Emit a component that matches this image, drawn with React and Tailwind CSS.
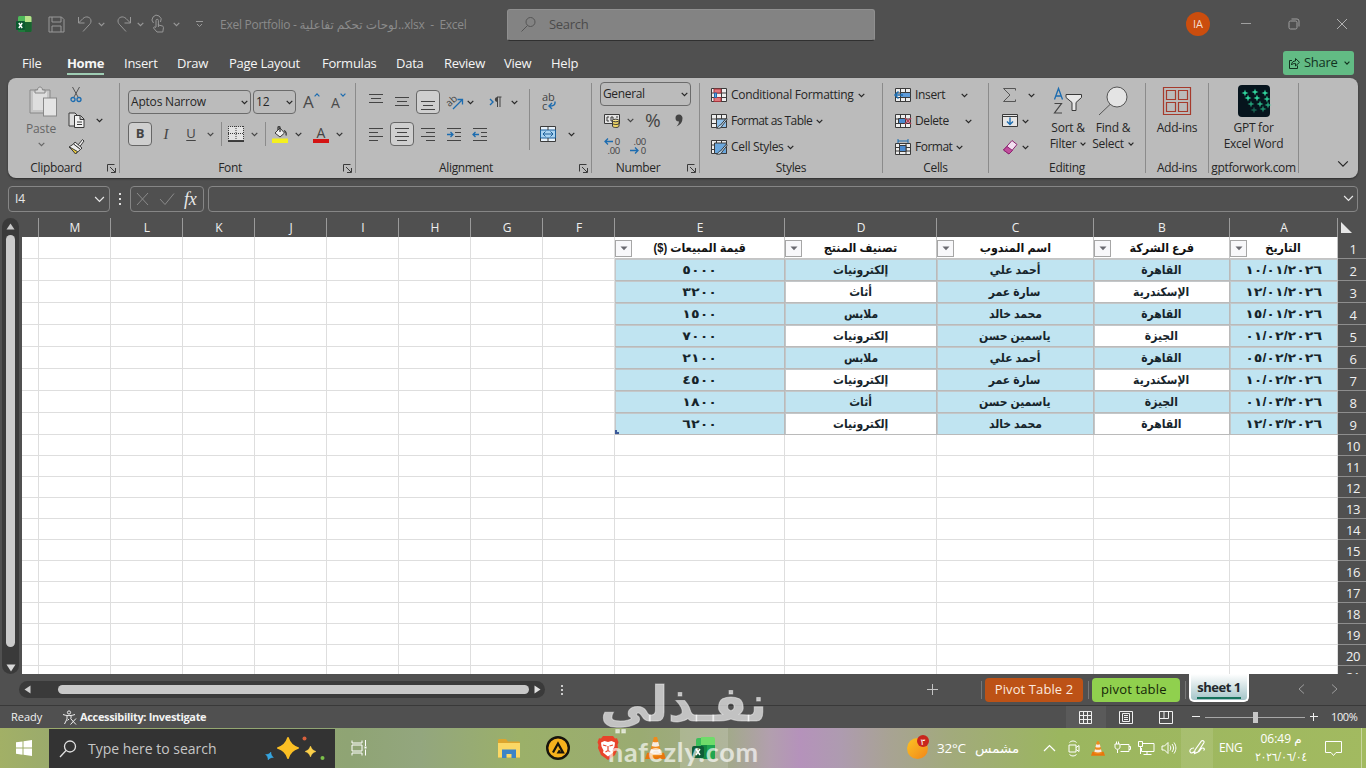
import React from "react";
import clsx from "clsx";

const UI_FONT = "font-['Open_Sans','Noto_Sans','DejaVu_Sans',sans-serif]";
const AR_FONT = "font-['Liberation_Sans','DejaVu_Sans',sans-serif]";

const Chevron = ({ className, w = 7 }) => (
  <svg
    className={clsx("shrink-0", className)}
    width={w}
    height={w}
    viewBox="0 0 8 8"
    fill="none"
    stroke="currentColor"
    strokeWidth="1.2"
  >
    <path d="M.8 2.2 4 5.4 7.2 2.2" vectorEffect="non-scaling-stroke" />
  </svg>
);

// Thin wrapper so each icon only has to list its shapes
const Icon = ({ w = 16, h = 16, className, children }) => (
  <svg
    width={w}
    height={h}
    viewBox={`0 0 ${w} ${h}`}
    fill="none"
    stroke="#3a3a3a"
    strokeWidth="1"
    className={clsx("shrink-0 overflow-visible", className)}
  >
    {children}
  </svg>
);

/* ---------- Title bar ---------- */

const ExcelLogo = ({ className, size = 16 }) => (
  <svg width={size} height={size} viewBox="0 0 16 16" className={clsx("shrink-0", className)}>
    <rect x="2" y="0" width="13.5" height="16" rx="1.5" fill="#1f7a3c" />
    <path d="M3.5 0H9v6H2V1.500A1.500 1.500 0 0 1 3.500 0Z" fill="#4fb85a" />
    <path d="M9 0h5a1.500 1.500 0 0 1 1.500 1.500V6H9Z" fill="#b7e28a" />
    <path d="M9 6h6.500v8.500A1.500 1.500 0 0 1 14 16H9Z" fill="#17652f" />
    <rect x="0" y="5" width="9" height="9" rx="1" fill="#0c5a30" />
    <path d="m2.800 7 3.400 5M6.200 7l-3.400 5" stroke="#fff" strokeWidth="1.400" />
  </svg>
);

// Newer, brighter variant of the logo used on the taskbar
const ExcelTaskbarLogo = () => (
  <svg width="24" height="24" viewBox="0 0 24 24" className="shrink-0">
    <path d="M6 2h8v9H4V4a2 2 0 0 1 2-2Z" fill="#3cbf5a" />
    <path d="M9 1h12a2 2 0 0 1 2 2v6H9Z" fill="#6fdc6a" />
    <path d="M9 9h14v12a2 2 0 0 1-2 2H9Z" fill="#138a43" />
    <path d="M15 9h8v12a2 2 0 0 1-2 2h-6Z" fill="#1fa650" />
    <rect x="0" y="10" width="12" height="12" rx="2" fill="#0e5c36" />
    <path d="m4 13 4 6M8 13l-4 6" stroke="#fff" strokeWidth="1.500" />
  </svg>
);

const TitleBar = () => (
  <div className="flex h-12 items-center text-[#8b8b8b]">
    <ExcelLogo className="ml-4" />
    <Icon w={17} h={17} className="ml-4 stroke-[#989898]">
      <path d="M1 1h12.500l2.500 2.500V16H1ZM4 1v5h9V1M4 16v-6h9v6" />
    </Icon>
    <Icon w={16} h={18} className="ml-[12px] stroke-[#989898]">
      <path d="M1.500 2v6h6M1.500 8 6 3.500c3-3 8-1.500 8 2.500 0 2-1 3-2 4l-6 6.500" />
    </Icon>
    <Chevron className="ml-[5px] text-[#989898]" />
    <Icon w={16} h={18} className="ml-[11px] stroke-[#989898]">
      <path d="M14.500 2v6h-6M14.500 8 10 3.500C7 .5 2 2 2 6c0 2 1 3 2 4l6 6.500" />
    </Icon>
    <Chevron className="ml-[5px] text-[#989898]" />
    <Icon w={14} h={18} className="ml-[7px] stroke-[#989898]">
      <path d="M2.500 8A4.500 4.500 0 1 1 9.500 7M5 12V5.500a1.200 1.200 0 0 1 2.400 0V10l4 1c1 .3 1.100 1 1 2l-.6 4H6l-3.500-4c0-1 1-1.500 2.500-.5M7.400 12V9" />
    </Icon>
    <Chevron className="ml-[8px] text-[#989898]" />
    <Icon w={9} h={8} className="ml-[15px] stroke-[#989898]">
      <path d="M1 1.500h7M2 4l2.500 2.500L7 4" />
    </Icon>
    <div className="ml-[16px] w-[287px] pt-px whitespace-nowrap text-[12px] tracking-[-0.27px]">
      Exel Portfolio - لوحات تحكم تفاعلية..xlsx&nbsp; -&nbsp; Excel
    </div>
    <div className="mt-px flex h-8 w-[368px] items-center rounded-[3px] border border-[#8f8f8f] border-b-[#303030] bg-[#838383] text-[#4b4b4b]">
      <Icon w={17} h={17} className="ml-[12px] stroke-[#555]">
        <circle cx="10.500" cy="6" r="4.500" />
        <path d="M7.500 9.500 1.500 15.500" />
      </Icon>
      <span className="ml-3 text-[13px] tracking-[-0.3px]">Search</span>
    </div>
    <div className="ml-[311px] flex size-6 items-center justify-center rounded-full bg-[#cb4d0d] text-[11px] text-[#f3ded2]">
      IA
    </div>
    <Icon w={12} h={12} className="ml-[30px] stroke-[#a0a0a0]">
      <path d="M1 5.500h10" />
    </Icon>
    <Icon w={12} h={12} className="ml-[36px] stroke-[#a0a0a0]">
      <rect x="1" y="3" width="8" height="8" rx="1.500" />
      <path d="M3.500 1H9a2 2 0 0 1 2 2v5.500" />
    </Icon>
    <Icon w={12} h={12} className="ml-[36px] stroke-[#b0b0b0]">
      <path d="m1 1 10 10M11 1 1 11" />
    </Icon>
  </div>
);

const menuTabs = [
  { name: "File", width: "w-[45px]" },
  { name: "Home", width: "w-[57px]", active: true },
  { name: "Insert", width: "w-[53px]" },
  { name: "Draw", width: "w-[52px]" },
  { name: "Page Layout", width: "w-[93px]" },
  { name: "Formulas", width: "w-[74px]" },
  { name: "Data", width: "w-[48px]" },
  { name: "Review", width: "w-[60px]" },
  { name: "View", width: "w-[47px]" },
  { name: "Help", width: "w-[40px]" },
];

const MenuTabs = () => (
  <div className="flex h-[30px] pl-[22px] text-[13px] tracking-[-0.25px] text-[#f5f5f5]">
    {menuTabs.map((tab) => (
      <div key={tab.name} className={clsx("shrink-0 whitespace-nowrap", tab.width)}>
        <span
          className={clsx(
            "inline-block h-[27px] pt-[5px] leading-5",
            tab.active && "border-b-2 border-[#9fcdb4] font-bold tracking-[-0.35px]"
          )}
        >
          {tab.name}
        </span>
      </div>
    ))}
    <div className="mt-[3px] mr-3 ml-auto flex h-6 w-[71px] items-center rounded-[3px] bg-[#62bb84] text-[#12331f]">
      <Icon w={12} h={12} className="ml-[5px] stroke-[#12331f]">
        <path d="M4 3.500H1.500v8h8V8.500M3.500 8c0-3 2-4 4-4V1.500l4 3.800-4 3.700V6.500c-2 0-3 .2-4 1.500Z" />
      </Icon>
      <span className="ml-1 text-[13px] tracking-[-0.3px]">Share</span>
      <Chevron className="ml-[7px]" w={6} />
    </div>
  </div>
);

/* ---------- Ribbon ---------- */

const Group = ({ label, width, launcher, children }) => (
  <div className={clsx("flex shrink-0 flex-col", width)}>
    <div className="flex h-20">{children}</div>
    <div className="flex h-5 items-center">
      <span
        className={clsx(
          "flex-1 text-center text-[12px] leading-4 tracking-[-0.35px] whitespace-nowrap",
          launcher && "pr-[3px]"
        )}
      >
        {label}
      </span>
      {launcher && (
        <Icon w={9} h={9} className="mr-[3px]">
          <path d="M.5 7.500v-7h7M3 3l5 5M8.500 4v4.500H4" />
        </Icon>
      )}
    </div>
  </div>
);

const Divider = () => <div className="mt-[5px] h-[90px] w-px shrink-0 bg-[#8b8b8b]" />;

const Lines = ({ rows, className, children }) => (
  <Icon w={14} h={15} className={clsx("stroke-[#444]", className)}>
    {rows.map(([x1, x2, y]) => (
      <path key={y} d={`M${x1} ${y}.5H${x2}`} />
    ))}
    {children}
  </Icon>
);

const Toggle = ({ className, children }) => (
  <div
    className={clsx(
      "flex size-6 shrink-0 items-center justify-center rounded-[4px] border border-[#666] bg-[#cfcfcf]",
      className
    )}
  >
    {children}
  </div>
);

const Clipboard = () => (
  <Group label="Clipboard" width="w-[111px]" launcher>
    <div className="ml-[18px] flex w-[30px] flex-col items-center pt-[8px] text-[#666]">
      <Icon w={28} h={32} className="ml-1">
        <path d="M1 4h20v23H1Z" fill="#c6c6c6" stroke="#888" />
        <path d="M4 6h14v18H4Z" fill="#dedede" stroke="none" />
        <path d="M6 7V4h2.500C8.500 0 13.500 0 13.500 4H16v3Z" fill="#d8d8d8" stroke="#888" />
        <rect x="14.500" y="12" width="13" height="18" fill="#e4e4e4" stroke="#888" />
      </Icon>
      <span className="text-[12px] leading-[21px] tracking-[-0.1px]">Paste</span>
      <Chevron className="mt-[2px]" />
    </div>
    <div className="ml-[11px] flex w-[18px] flex-col items-center pt-2">
      <Icon w={12} h={18}>
        <path d="M2.500 1 8 11M9.500 1 4 11" stroke="#555" />
        <circle cx="3" cy="13.500" r="2" stroke="#1c6cb0" strokeWidth="1.300" />
        <circle cx="9" cy="13.500" r="2" stroke="#1c6cb0" strokeWidth="1.300" />
      </Icon>
      <Icon w={17} h={17} className="mt-2">
        <path d="M6 14H1V1h6l2 2" fill="#ddd" />
        <path d="M6.500 3.500h6l3.500 3.500v8.500H6.500ZM12 4v3.500h4M9 10h5M9 12.500h5" fill="#f3f3f3" />
      </Icon>
      <Icon w={17} h={17} className="mt-[9px]">
        <path d="m10 7 4.500-5.500 1.500 1.500L11.500 9" fill="#eee" />
        <path d="m7 4 7 6-1.500 1.500-7-5.500Z" fill="#eee" />
        <path d="m5.500 6 7 5.500L8 15.500 1 9Z" fill="#eee" />
        <path d="m1.500 9 8 4.500-2 2.500Z" fill="#e9c93a" />
      </Icon>
    </div>
    <Chevron className="mt-[39px] ml-[11px]" />
  </Group>
);

const FontGroup = () => (
  <Group label="Font" width="w-[235px]" launcher>
    <div className="flex flex-col pl-[8px]">
      <div className="mt-[12px] flex h-6 items-center">
        <div className="flex h-6 w-[123px] items-center justify-between rounded-[4px] border border-[#6b6b6b] pr-[2px] pl-[2px] text-[12px] tracking-[-0.2px]">
          Aptos Narrow
          <Chevron />
        </div>
        <div className="ml-[2px] flex h-6 w-[43px] items-center justify-between rounded-[4px] border border-[#6b6b6b] px-[2px] text-[12px] tracking-[-0.2px]">
          12
          <Chevron />
        </div>
        <div className="ml-[7px] flex w-7 text-[17px] leading-5 text-[#4a4a4a]">
          A<Chevron w={6} className="rotate-180 text-[#1c6cb0]" />
        </div>
        <div className="flex w-5 pt-[2px] text-[14px] leading-5 text-[#4a4a4a]">
          A<Chevron w={6} className="-mt-px text-[#1c6cb0]" />
        </div>
      </div>
      <div className="mt-2 flex h-6 items-center text-[#444]">
        <Toggle>
          <span className="text-[13px] font-bold">B</span>
        </Toggle>
        <span className="ml-[9px] w-[10px] text-center font-['Liberation_Serif',serif] text-[15px] italic">I</span>
        <span className="ml-[15px] w-[10px] text-center text-[13px] underline underline-offset-2">U</span>
        <Chevron className="ml-[11px]" />
        <div className="ml-[7px] h-6 w-px bg-[#8b8b8b]" />
        <Icon w={16} h={16} className="ml-[6px]">
          <path d="M.5.5h15v14H.5Z" fill="#e4e4e4" stroke="none" />
          <path d="M.5 0v14M15.500 0v14M8 0v14M0 .5h16M0 7.500h16" strokeDasharray="1 1" />
          <path d="M0 15h16" stroke="#111" strokeWidth="1.500" />
        </Icon>
        <Chevron className="ml-[7px]" />
        <div className="ml-[7px] h-6 w-px bg-[#8b8b8b]" />
        <Icon w={16} h={17} className="ml-[6px]">
          <path d="m3 7 5-5 4.500 5L8 11Z" fill="#eee" />
          <path d="M6 4V1.500c0-1 2-1 2 0V6M12 4.500c2 1 2.500 3 2 5" strokeWidth="1.300" />
          <path d="M0 12.500h16V17H0Z" fill="#f4f01e" stroke="none" />
        </Icon>
        <Chevron className="ml-[7px] text-[#333]" />
        <div className="ml-[11px] w-4 border-b-4 border-[#d41414] text-center text-[14px] leading-[13px]">A</div>
        <Chevron className="ml-[7px] text-[#333]" />
      </div>
    </div>
  </Group>
);

const Alignment = () => (
  <Group label="Alignment" width="w-[235px]" launcher>
    <div className="flex w-[173px] flex-col pl-[13px]">
      <div className="mt-[12px] flex h-6 items-center">
        <Lines rows={[[0, 14, 1], [2, 12, 5], [0, 14, 9]]} className="mb-1" />
        <Lines rows={[[0, 14, 2], [2, 12, 6], [0, 14, 10]]} className="ml-3" />
        <Toggle className="ml-[7px]">
          <Lines rows={[[0, 14, 4], [2, 12, 8], [0, 14, 12]]} className="mt-1" />
        </Toggle>
        <Icon w={18} h={17} className="ml-[6px]">
          <text x="1" y="11" fontSize="10" fill="#444" stroke="none" transform="rotate(-42 5 9)" className={UI_FONT}>
            ab
          </text>
          <path d="m7 15 9-9M11.500 5.500H16.500V10.500" stroke="#1c6cb0" strokeWidth="1.300" />
        </Icon>
        <Chevron className="ml-[3px]" />
        <Icon w={13} h={14} className="ml-[15px]">
          <path d="m1 4 3 3-3 3" stroke="#1c6cb0" strokeWidth="1.400" />
          <path d="M8.500 2v10M11 2v10M12.500 2H8" stroke="#444" />
          <path d="M8.500 2C5 2 5 7 8.500 7Z" fill="#444" stroke="none" />
        </Icon>
        <Chevron className="ml-[9px]" />
      </div>
      <div className="mt-2 flex h-6 items-center">
        <Lines rows={[[0, 14, 1], [0, 9, 5], [0, 14, 9], [0, 9, 13]]} />
        <Toggle className="ml-[7px]">
          <Lines rows={[[0, 14, 1], [2, 12, 5], [0, 14, 9], [2, 12, 13]]} />
        </Toggle>
        <Lines rows={[[0, 14, 1], [5, 14, 5], [0, 14, 9], [5, 14, 13]]} className="ml-[7px]" />
        <Lines rows={[[0, 14, 1], [8, 14, 5], [8, 14, 9], [0, 14, 13]]} className="ml-3">
          <path d="M0 7.500h6M3.500 5 6 7.500 3.500 10" stroke="#1c6cb0" strokeWidth="1.300" />
        </Lines>
        <Lines rows={[[0, 14, 1], [8, 14, 5], [8, 14, 9], [0, 14, 13]]} className="ml-3">
          <path d="M0 7.500h6M2.500 5 0 7.500 2.500 10" stroke="#1c6cb0" strokeWidth="1.300" />
        </Lines>
      </div>
    </div>
    <div className="mt-[11px] h-[61px] w-px bg-[#8b8b8b]" />
    <div className="ml-[10px] flex flex-col">
      <Icon w={16} h={18} className="mt-[15px] ml-[2px]">
        <text x="0" y="7.500" fontSize="11" fill="#444" stroke="none" className={UI_FONT}>
          ab
        </text>
        <text x="0" y="16.500" fontSize="11" fill="#444" stroke="none" className={UI_FONT}>
          c
        </text>
        <path d="M13 8.500v1.500c0 2-1 3-5.500 3M10 10l-3 3 3 3" stroke="#1c6cb0" strokeWidth="1.400" />
      </Icon>
      <div className="mt-[15px] flex items-center">
        <Icon w={16} h={16}>
          <path d="M.5.5h15v15H.5Z" fill="#e8f2fa" />
          <path d="M.5 4h15v8H.5Z" fill="#a9d2f0" stroke="#1c5f99" />
          <path d="M3 8h10M5.500 5.500 3 8l2.500 2.500M10.500 5.500 13 8l-2.500 2.500" stroke="#1c5f99" />
          <path d="M8 .5V4M8 12v3.500" />
        </Icon>
        <Chevron className="ml-[12px]" />
      </div>
    </div>
  </Group>
);

const NumberGroup = () => (
  <Group label="Number" width="w-[107px]" launcher>
    <div className="flex flex-col pl-[8px]">
      <div className="mt-[4px] flex h-6 w-[91px] items-center justify-between rounded-[4px] border border-[#6b6b6b] px-[2px] text-[12px] tracking-[-0.35px]">
        General
        <Chevron />
      </div>
      <div className="mt-[3px] flex h-[22px] items-center text-[#444]">
        <Icon w={17} h={14} className="mt-[2px] ml-[4px]">
          <path d="M.5.5h15v9H.5Z" fill="#e4e4e4" />
          <path d="M5 3H3v4h2M7 3v4h2V3ZM12 3h2" />
          <path d="M8.500 6.500v5.500c0 2 6.500 2 6.500 0V6.500" fill="#efd564" />
          <ellipse cx="11.750" cy="6.500" rx="3.250" ry="1.300" fill="#f5e28c" />
          <path d="M8.500 9.300c0 1.600 6.500 1.600 6.500 0" />
        </Icon>
        <Chevron className="ml-[6px]" />
        <span className="ml-[11px] text-[19px] leading-5">%</span>
        <Icon w={8} h={13} className="ml-[14px]">
          <path
            d="M4 .5a3.500 3.500 0 0 1 3.500 3.800C7.500 8 5.500 11 1.500 12.500c1.500-1.500 2.300-3 2.500-5A3.500 3.500 0 1 1 4 .5Z"
            fill="#444"
            stroke="none"
          />
        </Icon>
      </div>
      <div className="mt-[4px] flex h-[22px] items-center text-[9.5px] leading-[9px] tracking-[-0.3px] text-[#444]">
        <div className="ml-[4px] w-4">
          <div className="flex items-center justify-between">
            <Icon w={9} h={7}>
              <path d="M1 3.500h8M4 .5l-3 3 3 3" stroke="#1c6cb0" strokeWidth="1.300" />
            </Icon>
            0
          </div>
          <div className="text-right">.00</div>
        </div>
        <div className="ml-[10px] w-4">
          <div className="text-right">.00</div>
          <div className="flex items-center justify-between">
            <Icon w={9} h={7}>
              <path d="M0 3.500h8M5 .5l3 3-3 3" stroke="#1c6cb0" strokeWidth="1.300" />
            </Icon>
            0
          </div>
        </div>
      </div>
    </div>
  </Group>
);

const gridLines = "M.5 1.500h15v13H.5ZM.5 6h15M.5 10.500h15M5.500 1.500v13M10.500 1.500v13";

const styleRows = [
  {
    name: "Conditional Formatting",
    text: "w-[124px] tracking-[-0.28px]",
    gap: "ml-[3px]",
    art: (
      <>
        <path d={gridLines} fill="#eee" />
        <path d="M3 2h7v4H3ZM3 10.500h7v4H3Z" fill="#e0777c" stroke="#a8343c" />
        <path d="M3.500 6h2v4.500h-2Z" fill="#6a9fd8" stroke="#1c6cb0" />
      </>
    ),
  },
  {
    name: "Format as Table",
    text: "w-[82px] tracking-[-0.55px]",
    gap: "ml-[3px]",
    art: (
      <>
        <path d={gridLines} fill="#eee" />
        <path d="M5.500 6h10v8.500h-10Z" fill="#8fc0ea" />
        <path d="m15.500 5-6 7c-2 0-2 2.500-4 3 2.500.8 5 0 5.500-2l5-6.500Z" fill="#bcd9ef" />
      </>
    ),
  },
  {
    name: "Cell Styles",
    text: "w-[53px] tracking-[-0.3px]",
    gap: "ml-[3px]",
    art: (
      <>
        <path d={gridLines} fill="#eee" />
        <path d="M3.500 4h12v10.500h-12Z" fill="#6aa7dd" />
        <path d="m15.500 5-6 7c-2 0-2 2.500-4 3 2.500.8 5 0 5.500-2l5-6.500Z" fill="#bcd9ef" />
      </>
    ),
  },
];

const cellRows = [
  {
    name: "Insert",
    text: "w-[29px] tracking-[-0.35px]",
    gap: "ml-[17px]",
    art: (
      <>
        <path d={gridLines} fill="#eee" />
        <path d="M5.500 5.500h10v5h-10Z" fill="#5f9bd8" />
        <path d="M0 8h8M3.500 4.500 0 8l3.500 3.500" stroke="#1c6cb0" strokeWidth="1.500" />
      </>
    ),
  },
  {
    name: "Delete",
    text: "w-[33px] tracking-[-0.4px]",
    gap: "ml-[17px]",
    art: (
      <>
        <path d={gridLines} fill="#eee" />
        <path d="M3.500 5.500h7v5h-7Z" fill="#4a8ad0" />
        <path d="m10 5 6 6M16 5l-6 6" stroke="#b04058" strokeWidth="1.500" />
      </>
    ),
  },
  {
    name: "Format",
    text: "w-[38px] tracking-[-0.5px]",
    gap: "ml-[3px]",
    art: (
      <>
        <path d="M.5 4.500h15v11H.5ZM.5 8.500h15M.5 12h15M4.500 4.500v11M11 4.500v11" fill="#eee" />
        <path d="M4.500 6.500H11v6H4.500Z" fill="#4a8ad0" />
        <path d="M3 0v4M13 0v4M3 2h10" stroke="#1c6cb0" />
      </>
    ),
  },
];

const IconList = ({ rows, className }) => (
  <div className={clsx("flex flex-col pt-[4px]", className)}>
    {rows.map((row) => (
      <div key={row.name} className="flex h-[26px] shrink-0 items-center text-[12px]">
        <Icon className="-ml-px">{row.art}</Icon>
        <span className={clsx("ml-1 whitespace-nowrap", row.text)}>{row.name}</span>
        <Chevron className={row.gap} />
      </div>
    ))}
  </div>
);

const BigButton = ({ icon, lines, className, chevron }) => (
  <div className={clsx("flex shrink-0 flex-col items-center text-[12px] leading-4 tracking-[-0.25px]", className)}>
    <div className="flex h-[42px] items-center pt-[3px]">{icon}</div>
    {lines.map((line, i) => (
      <div key={line} className="flex items-center whitespace-nowrap">
        {line}
        {chevron && i === lines.length - 1 && <Chevron w={6} className="ml-1" />}
      </div>
    ))}
  </div>
);

const Editing = () => (
  <Group label="Editing" width="w-[156px]">
    <div className="ml-[13px] flex w-[47px] flex-col pt-[4px]">
      <div className="flex h-[26px] shrink-0 items-center">
        <Icon className="stroke-[#555]">
          <path d="M13.500 3.500V1.500H1.500L8 8l-6.500 6.500h12v-2" />
        </Icon>
        <Chevron className="ml-[10px]" />
      </div>
      <div className="flex h-[26px] shrink-0 items-center">
        <Icon>
          <path d="M.5 1.500h15v12H.5Z" fill="#e6e6e6" />
          <path d="M.5 3.500h15" />
          <path d="M8 4.500v7M5 8.500l3 3 3-3" stroke="#1c6cb0" strokeWidth="1.400" />
        </Icon>
        <Chevron className="ml-[4px]" />
      </div>
      <div className="flex h-[26px] shrink-0 items-center">
        <Icon>
          <path d="M10 1.500 15 5.500 7 15 1.500 11Z" fill="#f2dff0" stroke="#8c2470" />
          <path d="M5 7.500 10.500 11.500 7 15 1.500 11Z" fill="#c24d9c" stroke="#8c2470" />
        </Icon>
        <Chevron className="ml-[4px]" />
      </div>
    </div>
    <BigButton
      className="w-[38px]"
      lines={["Sort &", "Filter"]}
      chevron
      icon={
        <Icon w={30} h={28}>
          <path d="M1.500 12.500 5.500 1.500l4 11M3 9h5" stroke="#1c6cb0" strokeWidth="1.300" />
          <path d="M1.500 16.500h7l-7 9.500h7.500" stroke="#444" strokeWidth="1.200" />
          <path d="M13 7.500h15.500v3l-5.500 5v8h-4v-8l-6-5Z" fill="#e8e8e8" />
        </Icon>
      }
    />
    <BigButton
      className="ml-[6px] w-[40px]"
      lines={["Find &", "Select"]}
      chevron
      icon={
        <Icon w={30} h={30}>
          <circle cx="19" cy="11" r="10" fill="#e4e4e4" stroke="#555" />
          <path d="M12 18.500 1 29" stroke="#555" />
        </Icon>
      }
    />
  </Group>
);

const sparkles = [
  [7, 8, 1], [17, 7, 1], [27, 8, 1], [10, 13, 1], [19, 13, 1], [29, 14, 0.9],
  [13, 19, 0.7], [22, 19, 0.8], [16, 25, 0.4], [25, 24, 0.6], [30, 20, 0.7],
];

const Ribbon = () => (
  <div className="mx-2 flex h-[100px] shrink-0 overflow-hidden rounded-[8px] bg-[#bbbbbb] text-[#262626] shadow-[0_1px_2px_#2c2c2c]">
    <Clipboard />
    <Divider />
    <FontGroup />
    <Divider />
    <Alignment />
    <Divider />
    <NumberGroup />
    <Divider />
    <Group label="Styles" width="w-[182px]">
      <IconList rows={styleRows} className="pl-[12px]" />
    </Group>
    <Divider />
    <Group label="Cells" width="w-[105px]">
      <IconList rows={cellRows} className="pl-[13px]" />
    </Group>
    <Divider />
    <Editing />
    <Divider />
    <Group label="Add-ins" width="w-[62px]">
      <BigButton
        className="w-[62px]"
        lines={["Add-ins"]}
        icon={
          <Icon w={28} h={28} className="stroke-[#a63a2c]">
            <path d="M.5.5h27v27H.5ZM3.500 3.500h9v9h-9ZM15.500 3.500h9v9h-9ZM3.500 15.500h9v9h-9ZM15.500 15.500h9v9h-9Z" strokeWidth="1.200" />
          </Icon>
        }
      />
    </Group>
    <Divider />
    <Group label="gptforwork.com" width="w-[89px]">
      <BigButton
        className="w-[89px]"
        lines={["GPT for", "Excel Word"]}
        icon={
          <Icon w={32} h={32}>
            <rect width="32" height="32" rx="4" fill="#06141d" stroke="none" />
            {sparkles.map(([x, y, o]) => (
              <path
                key={`${x}-${y}`}
                transform={`translate(${x} ${y})`}
                d="M0-3.500.9-.9 3.500 0 .9.900 0 3.500-.9.900-3.500 0-.9-.9Z"
                fill="#2fd19a"
                stroke="none"
                opacity={o}
              />
            ))}
          </Icon>
        }
      />
    </Group>
    <Divider />
    <Chevron w={12} className="mt-20 mr-[9px] ml-auto" />
  </div>
);

const FormulaBar = () => (
  <div className="mt-2 flex h-[26px] shrink-0 items-stretch px-2 text-[#e8e8e8]">
    <div className="flex w-[102px] items-center justify-between rounded-[4px] border border-[#868686] px-[6px] text-[12px]">
      I4
      <Chevron w={11} className="mr-[-2px]" />
    </div>
    <Icon w={4} h={14} className="mt-[6px] ml-[8px]">
      <path d="M1 1h2v2H1ZM1 6h2v2H1ZM1 11h2v2H1Z" fill="#ddd" stroke="none" />
    </Icon>
    <div className="ml-[8px] flex w-[74px] items-center rounded-[4px] border border-[#868686]">
      <Icon w={13} h={14} className="ml-[5px] stroke-[#8a8a8a]">
        <path d="m1 1 11 12M12 1 1 13" />
      </Icon>
      <Icon w={16} h={14} className="ml-[10px] stroke-[#8a8a8a]">
        <path d="m1 7 5 5.500L15 1.500" />
      </Icon>
      <span className="ml-[9px] font-['Liberation_Serif',serif] text-[18px] leading-5 tracking-[-0.2px] italic">
        fx
      </span>
    </div>
    <div className="ml-1 flex flex-1 items-center justify-end rounded-[4px] border border-[#868686] pr-[3px]">
      <Chevron w={11} className="mb-[2px]" />
    </div>
  </div>
);

/* ---------- Sheet ---------- */

const COLS =
  "grid grid-cols-[17px_72px_72px_72px_72px_72px_72px_72px_72px_170px_152px_157px_136px_108px_28px]";
const emptyColumns = ["", "M", "L", "K", "J", "I", "H", "G", "F"];
const dataColumns = ["E", "D", "C", "B", "A"];

const headers = ["قيمة المبيعات ($)", "تصنيف المنتج", "اسم المندوب", "فرع الشركة", "التاريخ"];

// Same order as dataColumns: amount, category, agent, branch, date
const records = [
  ["٥٠٠٠", "إلكترونيات", "أحمد علي", "القاهرة", "١٠/٠١/٢٠٢٦"],
  ["٣٢٠٠", "أثاث", "سارة عمر", "الإسكندرية", "١٢/٠١/٢٠٢٦"],
  ["١٥٠٠", "ملابس", "محمد خالد", "القاهرة", "١٥/٠١/٢٠٢٦"],
  ["٧٠٠٠", "إلكترونيات", "ياسمين حسن", "الجيزة", "٠١/٠٢/٢٠٢٦"],
  ["٢١٠٠", "ملابس", "أحمد علي", "القاهرة", "٠٥/٠٢/٢٠٢٦"],
  ["٤٥٠٠", "إلكترونيات", "سارة عمر", "الإسكندرية", "١٠/٠٢/٢٠٢٦"],
  ["١٨٠٠", "أثاث", "ياسمين حسن", "الجيزة", "٠١/٠٣/٢٠٢٦"],
  ["٦٢٠٠", "إلكترونيات", "محمد خالد", "القاهرة", "١٢/٠٣/٢٠٢٦"],
];

const RowNumber = ({ n }) => (
  <div className="flex items-center justify-center border-b border-[#8d8d8d] bg-[#505050] pt-[3px] pl-[2px] text-[13px] leading-none tracking-[-0.4px] text-[#f0f0f0]">
    {n}
  </div>
);

const EmptyCell = () => <div className="border-r border-b border-[#dedede]" />;

const FilterButton = () => (
  <div className="absolute top-[3px] left-0 flex size-[17px] items-center justify-center border border-[#a6a6a6] bg-[#f8f8fa]">
    <svg width="8" height="5" viewBox="0 0 8 5">
      <path d="M.5.5h7L4 4.200Z" fill="#6a6a70" />
    </svg>
  </div>
);

const Sheet = () => (
  <div className="h-[456px] flex-1 overflow-hidden bg-white">
    <div className={clsx(COLS, "h-[19px] bg-[#505050] text-[12px] text-[#efefef]")}>
      {[...emptyColumns, ...dataColumns].map((c, i) => (
        <div key={i} className="flex items-center justify-center border-r border-[#9a9a9a] pl-[1px] leading-none">
          {c}
        </div>
      ))}
      <svg width="28" height="19" viewBox="0 0 28 19">
        <path d="M3 4v11h11Z" fill="#e6e6e6" />
      </svg>
    </div>

    <div className={clsx(COLS, "h-[22px]")}>
      {emptyColumns.map((c, i) => (
        <EmptyCell key={i} />
      ))}
      {headers.map((h) => (
        <div
          key={h}
          dir="rtl"
          className={clsx(
            "relative flex items-center justify-center border-r border-b border-[#c4c4c4] text-[12px] font-bold text-[#111]",
            AR_FONT
          )}
        >
          <span className="scale-x-[0.93] whitespace-nowrap">{h}</span>
          <FilterButton />
        </div>
      ))}
      <RowNumber n={1} />
    </div>

    {records.map((record, r) => (
      <div key={r} className={clsx(COLS, "h-[22px]")}>
        {emptyColumns.map((c, i) => (
          <EmptyCell key={i} />
        ))}
        {record.map((value, i) => {
          const numeric = i === 0 || i === 4;
          // Only the category and branch columns are banded
          const plain = r % 2 === 1 && (i === 1 || i === 3);
          return (
            <div
              key={i}
              dir={numeric ? "ltr" : "rtl"}
              className={clsx(
                "relative flex items-center justify-center border-r border-b border-[#bababa] text-[12px] font-bold whitespace-nowrap text-[#16242b] shadow-[inset_1px_1px_0_#c3c7c9]",
                AR_FONT,
                plain ? "bg-white" : "bg-[#c0e4f1]"
              )}
            >
              <span className={numeric ? "scale-x-[1.18]" : "scale-x-90"}>{value}</span>
              {r === records.length - 1 && i === 0 && (
                <svg className="absolute bottom-0 left-0" width="4" height="4" viewBox="0 0 4 4">
                  <path d="M0 0h2v2h2v2H0Z" fill="#3b5a9a" />
                </svg>
              )}
            </div>
          );
        })}
        <RowNumber n={r + 2} />
      </div>
    ))}

    {Array.from({ length: 12 }, (_, r) => (
      <div key={r} className={clsx(COLS, "h-[21px]")}>
        {[...emptyColumns, ...dataColumns].map((c, i) => (
          <EmptyCell key={i} />
        ))}
        <RowNumber n={r + 10} />
      </div>
    ))}
  </div>
);

const VerticalScroll = () => (
  <div className="flex w-[22px] shrink-0 pl-[2px]">
    <div className="flex h-[456px] w-[17px] flex-col items-center rounded-full bg-[#3a3a3a] pt-[5px] pb-[2px]">
      <svg width="9" height="7" viewBox="0 0 9 7">
        <path d="M4.500.5 8.500 6.500H.5Z" fill="#c8c8c8" />
      </svg>
      <div className="mt-[5px] h-[412px] w-[9px] rounded-full bg-[#cacaca]" />
      <svg className="mt-auto" width="10" height="8" viewBox="0 0 10 8">
        <path d="M.5.5h9L5 7.500Z" fill="#d8d8d8" />
      </svg>
    </div>
  </div>
);

/* ---------- Bottom bars ---------- */

const SheetTabs = () => (
  <div className="flex h-8 shrink-0 border-b border-[#393939] text-[13px]">
    <div className="mt-[7px] ml-[19px] flex h-[17px] w-[526px] items-center rounded-full bg-[#3a3a3a] pr-[4px] pl-[5px]">
      <svg width="7" height="9" viewBox="0 0 7 9">
        <path d="M6.500.5v8L.5 4.500Z" fill="#cfcfcf" />
      </svg>
      <div className="ml-[27px] h-[9px] w-[471px] rounded-full bg-[#c8c8c8]" />
      <svg className="ml-[5px]" width="7" height="9" viewBox="0 0 7 9">
        <path d="M.5.5v8l6-4Z" fill="#e0e0e0" />
      </svg>
    </div>
    <Icon w={4} h={14} className="mt-[10px] ml-[15px]">
      <path d="M1 1h2v2H1ZM1 5h2v2H1ZM1 9h2v2H1Z" fill="#ccc" stroke="none" />
    </Icon>
    <Icon w={12} h={12} className="mt-[10px] ml-[362px] stroke-[#c4c4c4]">
      <path d="M6.500 0v11M1 5.500h11" />
    </Icon>
    <div className="mt-[7px] ml-[43px] h-[18px] w-px bg-[#777]" />
    <div className="mt-1 ml-[3px] flex h-6 w-[98px] items-center justify-center rounded-[4px] bg-[#bd5216] tracking-[0.1px] text-[#fbe9df]">
      Pivot Table 2
    </div>
    <div className="mt-[7px] ml-[5px] h-[18px] w-px bg-[#777]" />
    <div className="mt-1 ml-[3px] flex h-6 w-[88px] items-center rounded-[4px] bg-[#90d04e] pl-[9px] tracking-[0.15px] text-[#142608]">
      pivot table
    </div>
    <div className="mt-[7px] ml-[5px] h-[18px] w-px bg-[#777]" />
    <div className="ml-[3px] h-7 w-[60px] rounded-b-[5px] border-2 border-t-0 border-white bg-linear-to-b from-white to-[#a5c5c9] px-[6px] pt-[4px]">
      <div className="h-[21px] border-b-2 border-[#16725c] text-center text-[13px] leading-[19px] font-bold tracking-[-0.5px] whitespace-nowrap text-[#22282c]">
        sheet 1
      </div>
    </div>
    <Icon w={7} h={12} className="mt-[9px] ml-[49px] stroke-[#9c9c9c]">
      <path d="M6 1.500 1 6l5 4.500" />
    </Icon>
    <Icon w={7} h={12} className="mt-[9px] ml-[26px] stroke-[#9c9c9c]">
      <path d="m1 1.500 5 4.500-5 4.500" />
    </Icon>
  </div>
);

const StatusBar = () => (
  <div className="flex h-[22px] shrink-0 items-center text-[11px] text-[#f2f2f2]">
    <span className="ml-[11px] w-[51px] pt-px">Ready</span>
    <Icon w={15} h={15} className="stroke-[#eee]">
      <circle cx="7" cy="2.500" r="1.600" />
      <path d="M1 4.500c3.500 1.500 8.500 1.500 12 0M5 6v3l-2.500 5M9 6v2.500M5.500 10.500 7 9M8.500 8.500l5.500 6M14 8.500l-5.500 6" />
    </Icon>
    <span className="ml-[3px] font-bold tracking-[-0.34px]">Accessibility: Investigate</span>
    <div className="ml-auto flex h-[22px] w-10 items-center justify-center bg-[#5a5a5a] pr-px">
      <Icon w={13} h={13} className="stroke-[#f0f0f0]">
        <path d="M.5.500h12v12H.5ZM.5 4.500h12M.5 8.500h12M4.500.5v12M8.500.5v12" />
      </Icon>
    </div>
    <Icon w={14} h={13} className="ml-[13px] stroke-[#f0f0f0]">
      <path d="M.5.500h13v12H.5ZM3.500 2.500h7v8h-7ZM5 4.500h4M5 6.500h4M5 8.500h4" />
    </Icon>
    <Icon w={14} h={13} className="ml-[26px] stroke-[#f0f0f0]">
      <path d="M.5.500h13v12H.5ZM5 .5v7M9.500.5v7M.5 7.500h9" />
    </Icon>
    <Icon w={8} h={8} className="ml-[19px] stroke-[#f0f0f0]">
      <path d="M0 3.500h8" />
    </Icon>
    <div className="ml-[5px] flex h-3 w-[100px] items-center">
      <div className="h-px w-[48px] bg-[#a8a8a8]" />
      <div className="h-[11px] w-[5px] bg-[#c8c8c8]" />
      <div className="h-px flex-1 bg-[#a8a8a8]" />
    </div>
    <Icon w={8} h={8} className="ml-[5px] stroke-[#f0f0f0]">
      <path d="M0 3.500h8M3.500 0v8" />
    </Icon>
    <span className="mr-[7px] ml-[13px] w-[28px] tracking-[-0.4px]">100%</span>
  </div>
);

const Cone = ({ w = 20, h = 21, className }) => (
  <svg width={w} height={h} viewBox="0 0 20 21" className={clsx("shrink-0", className)}>
    <path d="M2 15h16l2 6H0Z" fill="#e8760c" />
    <path d="M8.500 0h3L16 17c-2 2-10 2-12 0Z" fill="#f08a1c" />
    <path d="m7.400 4.500-1 4c2 1 5.200 1 7.200 0l-1-4c-1.500.8-3.700.8-5.200 0ZM5.700 11.500l-.9 3.500c3 1.500 7.400 1.500 10.400 0l-.9-3.500c-2.500 1.200-6.100 1.200-8.600 0Z" fill="#f6ece2" />
  </svg>
);

const star = "M0-10C1.500-5 5-1.500 10 0 5 1.500 1.500 5 0 10-1.500 5-5 1.500-10 0-5-1.500-1.500-5 0-10Z";

const Taskbar = () => (
  <div className="flex h-10 shrink-0 items-center bg-[linear-gradient(90deg,#a2b066_0px,#9bab6c_48px,#8fa474_350px,#93a67e_420px,#9bb069_520px,#9aab72_640px,#a3a98c_730px,#b29fae_770px,#b592bb_800px,#ae9bb0_840px,#a8a393_890px,#a2aa7c_950px,#9bb65f_1060px,#a2ba60_1366px)] text-white">
    <svg className="ml-4" width="16" height="16" viewBox="0 0 16 16">
      <path d="M0 2.300 6.500 1.400v6.200H0ZM7.500 1.200 16 0v7.600H7.500ZM0 8.500h6.500v6.200L0 13.700ZM7.500 8.500H16V16l-8.500-1.200Z" fill="#fff" />
    </svg>
    <div className="ml-[17px] flex h-[39px] w-[286px] items-center self-end bg-[#333333]">
      <Icon w={18} h={18} className="ml-[10px] stroke-[#e0e0e0]">
        <circle cx="11" cy="6.500" r="5.500" strokeWidth="1.300" />
        <path d="M7 10.500 1 17" strokeWidth="1.300" />
      </Icon>
      <span className="ml-[11px] w-[177px] text-[14px] tracking-[-0.02px] whitespace-nowrap text-[#c6c6c6]">
        Type here to search
      </span>
      <svg width="62" height="26" viewBox="0 0 62 26">
        <path
          transform="translate(23 12) scale(1.020)"
          d={star}
          fill="#fbbf24"
          stroke="#fbbf24"
          strokeWidth="1.600"
          strokeLinejoin="round"
        />
        <path transform="translate(45.500 15.500) scale(.54)" d={star} fill="#fcd04a" stroke="#fcd04a" />
        <path transform="translate(4.500 20) rotate(20) scale(.42)" d={star} fill="#35a5e0" stroke="#35a5e0" />
        <circle cx="39.500" cy="2.500" r="2" fill="#d9603c" />
        <circle cx="57.500" cy="22" r="2" fill="#7cc04a" />
      </svg>
    </div>
    <Icon w={17} h={16} className="ml-[16px] stroke-white">
      <path d="M1 .5v2.500h10V.5M1 15.500V13h10v2.500M1 5h10v6H1ZM14.500 0v6M14.500 9.500v6" />
      <path d="M13.500 6.500h2v2h-2Z" fill="#fff" stroke="none" />
    </Icon>
    <svg className="ml-[130px] shrink-0" width="22" height="19" viewBox="0 0 22 19">
      <path d="M0 1.500C0 .7.500 0 1.500 0H8l2 2.500h10.500c1 0 1.500.5 1.500 1.500v14.500H0Z" fill="#dca52e" />
      <path d="M0 4h22v14.500H0Z" fill="#fbd865" />
      <path d="M4 19v-8.500h14V19h-4.500v-4h-5v4Z" fill="#3c84c6" />
    </svg>
    <svg className="ml-[26px] shrink-0" width="24" height="24" viewBox="0 0 24 24">
      <circle cx="12" cy="12" r="10.800" fill="#f6b11d" stroke="#17140c" strokeWidth="2.400" />
      <path d="M7 16.500 12 7.500l5 9h-4.500l1.300-2.200" fill="none" stroke="#17140c" strokeWidth="2.200" />
    </svg>
    <svg className="ml-[27px] shrink-0" width="22" height="24" viewBox="0 0 22 24">
      <path d="M6 0h10l2 2.500 2-.3 1.500 4L20.500 9l.5 3-3 7-7 5-7-5-3-7 .5-3L.5 6.200 2 2.200l2 .3Z" fill="#e8432a" />
      <path d="M4 6.500 7.500 5l3.500 1 3.500-1L18 6.500l-.5 4-2 4 .5 2-5 4-5-4 .5-2-2-4Z" fill="#fff" />
      <path d="m6 9 3.500 1M16 9l-3.500 1M11 10v5M8.500 16l2.500-1.500 2.500 1.500" stroke="#e8432a" strokeWidth="1.200" fill="none" />
    </svg>
    <Cone className="ml-[26px]" w={21} h={22} />
    <div className="ml-[14px] flex h-10 w-12 items-center justify-center bg-white/15">
      <ExcelTaskbarLogo />
    </div>

    <div className="relative ml-auto size-6 shrink-0">
      <div className="mt-[2px] size-[21px] rounded-full bg-linear-to-br from-[#fcc223] to-[#f0861a]" />
      <div className="absolute -top-px right-[2px] flex size-3 items-center justify-center rounded-full bg-[#c9251d] text-[9px] leading-none">
        ٣
      </div>
    </div>
    <span className="ml-[6px] w-[38px] text-[13.5px] tracking-[-0.2px]">32°C</span>
    <span className="w-[44px] text-center text-[13.5px]">مشمس</span>
    <Icon w={13} h={8} className="ml-[24px] stroke-white">
      <path d="m1 7 5.500-5.500L12 7" strokeWidth="1.200" />
    </Icon>
    <Icon w={12} h={17} className="ml-[12px] stroke-white">
      <path d="M1 5h7v7H1ZM8 7.500l3-2v6l-3-2M1.500 2.500c2-2 5-2 7 0M1.500 14.500c2 2 5 2 7 0" />
    </Icon>
    <Cone className="ml-[11px]" w={14} h={15} />
    <Icon w={17} h={14} className="ml-[9px] stroke-white">
      <path d="M6.500 3.500H15v7H6.500M15 5.500h1.500v3H15M1 3h5v3c0 3-5 3-5 0ZM2.500.5V3M4.500.5V3M3.500 8.500V12" />
    </Icon>
    <Icon w={17} h={15} className="ml-[7px] stroke-white">
      <path d="M5 2.500h11v8H3.500V7M9 10.500V13M5.500 13.500h8M.5.500h4v5h-4ZM2.500 5.500V13" />
    </Icon>
    <Icon w={15} h={14} className="ml-[6px] stroke-white">
      <path d="M1 5h2.500L7 1.500v11L3.500 9H1ZM9 4.500c1 1.500 1 3.500 0 5M11 3c2 2.500 2 5.500 0 8M13 1.500c2.500 3.500 2.500 7.500 0 11" />
    </Icon>
    <div className="ml-[5px] flex h-10 w-8 items-center justify-center bg-white/10">
      <Icon w={17} h={18} className="stroke-white">
        <path d="m6 11 6.500-9c1-1 3 0 2.500 1.500l-6 9.500-3.500 1.500ZM5 9c-4 0-5 3-3.500 4.500 2 1.500 4-1.500 4-1M9 13c2 0 2.500-4 4.500-4s2.500 2 1 2.500" strokeWidth="1.200" />
      </Icon>
    </div>
    <span className="ml-[6px] w-[28px] text-[12px] tracking-[-0.4px]">ENG</span>
    <div className="ml-[2px] flex w-[64px] flex-col items-center text-[12px] leading-[18px] tracking-[-0.5px] whitespace-nowrap">
      <span>06:49 م</span>
      <span className="scale-x-[0.86]">٢٠٢٦/٠٦/٠٤</span>
    </div>
    <Icon w={17} h={17} className="ml-[12px] stroke-white">
      <path d="M.5 1.500h16v11H11L8.500 15.500 6 12.500H.5Z" />
    </Icon>
    <div className="mr-[4px] ml-[19px] h-10 w-px bg-white/40" />
  </div>
);

const Watermark = () => (
  <div className="pointer-events-none absolute top-[674px] left-[600px] flex w-[167px] flex-col items-center leading-none whitespace-nowrap text-white/65">
    <span
      dir="rtl"
      className="font-['DejaVu_Sans',sans-serif] text-[49px] leading-[62px] font-bold [-webkit-text-stroke:1px_rgba(255,255,255,0.4)]"
    >
      نفـذلي
    </span>
    <span className="font-['Lato',sans-serif] text-[27px] leading-[32px] font-bold tracking-[0.8px]">nafezly.com</span>
  </div>
);

const App = () => (
  <div className={clsx("relative flex h-[768px] w-[1366px] flex-col overflow-hidden bg-[#505050]", UI_FONT)}>
    <TitleBar />
    <MenuTabs />
    <Ribbon />
    <FormulaBar />
    <div className="mt-[6px] flex h-[456px] shrink-0">
      <VerticalScroll />
      <Sheet />
    </div>
    <SheetTabs />
    <StatusBar />
    <Taskbar />
    <Watermark />
  </div>
);

export default App;
